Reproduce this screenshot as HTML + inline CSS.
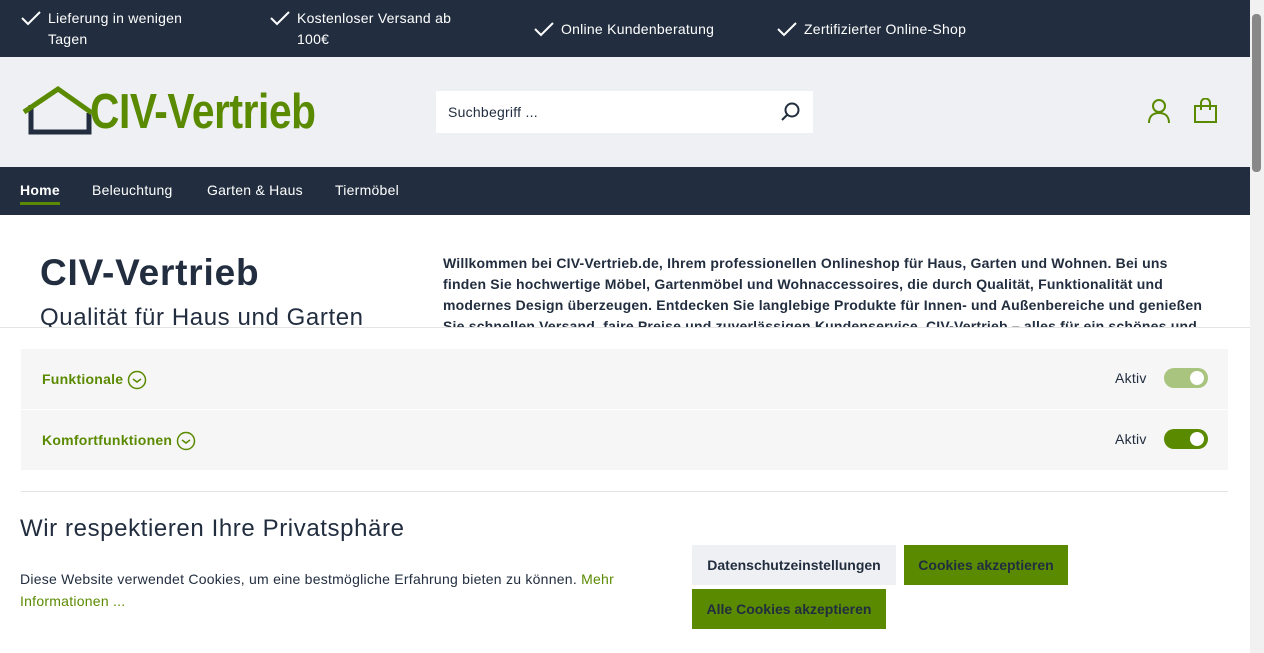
<!DOCTYPE html>
<html><head><meta charset="utf-8"><style>
*{margin:0;padding:0;box-sizing:border-box}
body{width:1264px;height:653px;overflow:hidden;font-family:"Liberation Sans",sans-serif;background:#fff;position:relative;color:#222e3f;letter-spacing:0.25px}
.top{position:absolute;left:0;top:0;width:1250px;height:57px;background:#222e3f;color:#fff;font-size:14px}
.top div{position:absolute;line-height:21px}
.top svg{position:absolute;left:-28px;top:2px}
.hdr{position:absolute;left:0;top:57px;width:1250px;height:110px;background:#eff0f4}
.nav{position:absolute;left:0;top:167px;width:1250px;height:48px;background:#222e3f;color:#fff;font-size:14px}
.nav span{position:absolute;top:15px}
.sb{position:absolute;left:1250px;top:0;width:14px;height:653px;background:#f1f1f1}
.thumb{position:absolute;left:1252px;top:14px;width:9px;height:158px;background:#888;border-radius:4px}
.row{position:absolute;left:21px;width:1207px;height:60px;background:#f6f6f6}
.row .t{position:absolute;left:21px;top:22px;color:#5a8a00;font-weight:bold;font-size:14px}
.row .a{position:absolute;left:1094px;top:21px;font-size:14px}
.tg{position:absolute;left:1143px;top:19px;width:44px;height:20px;border-radius:10px}
.tg:after{content:"";position:absolute;right:4px;top:3px;width:14px;height:14px;border-radius:50%;background:#fff}
.btn{position:absolute;height:40px;font-size:14px;font-weight:bold;line-height:40px;text-align:center;letter-spacing:0}
</style></head><body>
<div class="top">
<div style="left:48px;top:8px">Lieferung in wenigen<br>Tagen<svg width="22" height="16"><path d="M2 8l6 6L20 2" stroke="#fff" stroke-width="2" fill="none"/></svg></div>
<div style="left:297px;top:8px">Kostenloser Versand ab<br>100€<svg width="22" height="16"><path d="M2 8l6 6L20 2" stroke="#fff" stroke-width="2" fill="none"/></svg></div>
<div style="left:561px;top:19px">Online Kundenberatung<svg width="22" height="16"><path d="M2 8l6 6L20 2" stroke="#fff" stroke-width="2" fill="none"/></svg></div>
<div style="left:804px;top:19px">Zertifizierter Online-Shop<svg width="22" height="16"><path d="M2 8l6 6L20 2" stroke="#fff" stroke-width="2" fill="none"/></svg></div>
</div>
<div class="hdr">
<svg style="position:absolute;left:22px;top:28px" width="72" height="50"><path d="M9 20v27h58V28" stroke="#222e3f" stroke-width="5" fill="none"/><path d="M2 27L36 4 70 28" stroke="#5a8a00" stroke-width="5" fill="none"/></svg>
<div style="position:absolute;left:90px;top:27px;font-size:49px;font-weight:bold;color:#5a8a00;transform:scaleX(0.83);transform-origin:left top;white-space:nowrap;letter-spacing:-0.5px">CIV-Vertrieb</div>
<div style="position:absolute;left:436px;top:34px;width:377px;height:42px;background:#fff;font-size:14px;line-height:42px;padding-left:12px">Suchbegriff ...
<svg style="position:absolute;right:12px;top:11px" width="20" height="20"><circle cx="11" cy="8" r="6.5" stroke="#222e3f" stroke-width="2" fill="none"/><path d="M6 13l-5 5" stroke="#222e3f" stroke-width="2"/></svg></div>
<svg style="position:absolute;left:1147px;top:41px" width="24" height="26"><circle cx="12" cy="8" r="6" stroke="#5a8a00" stroke-width="2" fill="none"/><path d="M2 25c0-7 4-10 10-10s10 3 10 10" stroke="#5a8a00" stroke-width="2" fill="none"/></svg>
<svg style="position:absolute;left:1193px;top:41px" width="26" height="26"><path d="M2 8h21v16H2z" stroke="#5a8a00" stroke-width="2" fill="none"/><path d="M8 12V5a4.5 4.5 0 0 1 9 0v7" stroke="#5a8a00" stroke-width="2" fill="none"/></svg>
</div>
<div class="nav">
<span style="left:20px;font-weight:bold">Home</span>
<div style="position:absolute;left:20px;top:35px;width:40px;height:3px;background:#5a8a00"></div>
<span style="left:92px">Beleuchtung</span><span style="left:207px">Garten &amp; Haus</span><span style="left:335px">Tiermöbel</span>
</div>
<div style="position:absolute;left:40px;top:252px;font-size:37px;font-weight:bold;letter-spacing:0.8px">CIV-Vertrieb</div>
<div style="position:absolute;left:40px;top:304px;font-size:24px;letter-spacing:0.6px">Qualität für Haus und Garten</div>
<div style="position:absolute;left:443px;top:253px;width:800px;font-size:14px;font-weight:bold;line-height:21px;height:74px;overflow:hidden;letter-spacing:0.2px;white-space:nowrap">Willkommen bei CIV-Vertrieb.de, Ihrem professionellen Onlineshop für Haus, Garten und Wohnen. Bei uns<br>finden Sie hochwertige Möbel, Gartenmöbel und Wohnaccessoires, die durch Qualität, Funktionalität und<br>modernes Design überzeugen. Entdecken Sie langlebige Produkte für Innen- und Außenbereiche und genießen<br>Sie schnellen Versand, faire Preise und zuverlässigen Kundenservice. CIV-Vertrieb – alles für ein schönes und</div>
<div style="position:absolute;left:0;top:327px;width:1250px;height:326px;background:#fff;border-top:1px solid #e4e4e4">
<div class="row" style="top:21px"><span class="t">Funktionale</span><svg style="position:absolute;left:106px;top:21px" width="20" height="20"><circle cx="10" cy="10" r="8.5" stroke="#5a8a00" stroke-width="1.5" fill="none"/><path d="M6 9l4 3 4-3" stroke="#5a8a00" stroke-width="1.5" fill="none"/></svg><span class="a">Aktiv</span><div class="tg" style="background:#a8c47f"></div></div>
<div class="row" style="top:82px"><span class="t">Komfortfunktionen</span><svg style="position:absolute;left:155px;top:21px" width="20" height="20"><circle cx="10" cy="10" r="8.5" stroke="#5a8a00" stroke-width="1.5" fill="none"/><path d="M6 9l4 3 4-3" stroke="#5a8a00" stroke-width="1.5" fill="none"/></svg><span class="a">Aktiv</span><div class="tg" style="background:#5a8a00"></div></div>
<div style="position:absolute;left:21px;top:163px;width:1207px;height:1px;background:#e4e4e4"></div>
<div style="position:absolute;left:20px;top:187px;font-size:24px;letter-spacing:0.6px">Wir respektieren Ihre Privatsphäre</div>
<div style="position:absolute;left:20px;top:240px;width:640px;font-size:14px;line-height:22px">Diese Website verwendet Cookies, um eine bestmögliche Erfahrung bieten zu können. <span style="color:#5a8a00">Mehr Informationen ...</span></div>
<div class="btn" style="left:692px;top:217px;width:204px;background:#eff0f4">Datenschutzeinstellungen</div>
<div class="btn" style="left:904px;top:217px;width:164px;background:#5a8a00;color:#222e3f">Cookies akzeptieren</div>
<div class="btn" style="left:692px;top:261px;width:194px;background:#5a8a00;color:#222e3f">Alle Cookies akzeptieren</div>
</div>
<div class="sb"></div><div class="thumb"></div>
</body></html>
